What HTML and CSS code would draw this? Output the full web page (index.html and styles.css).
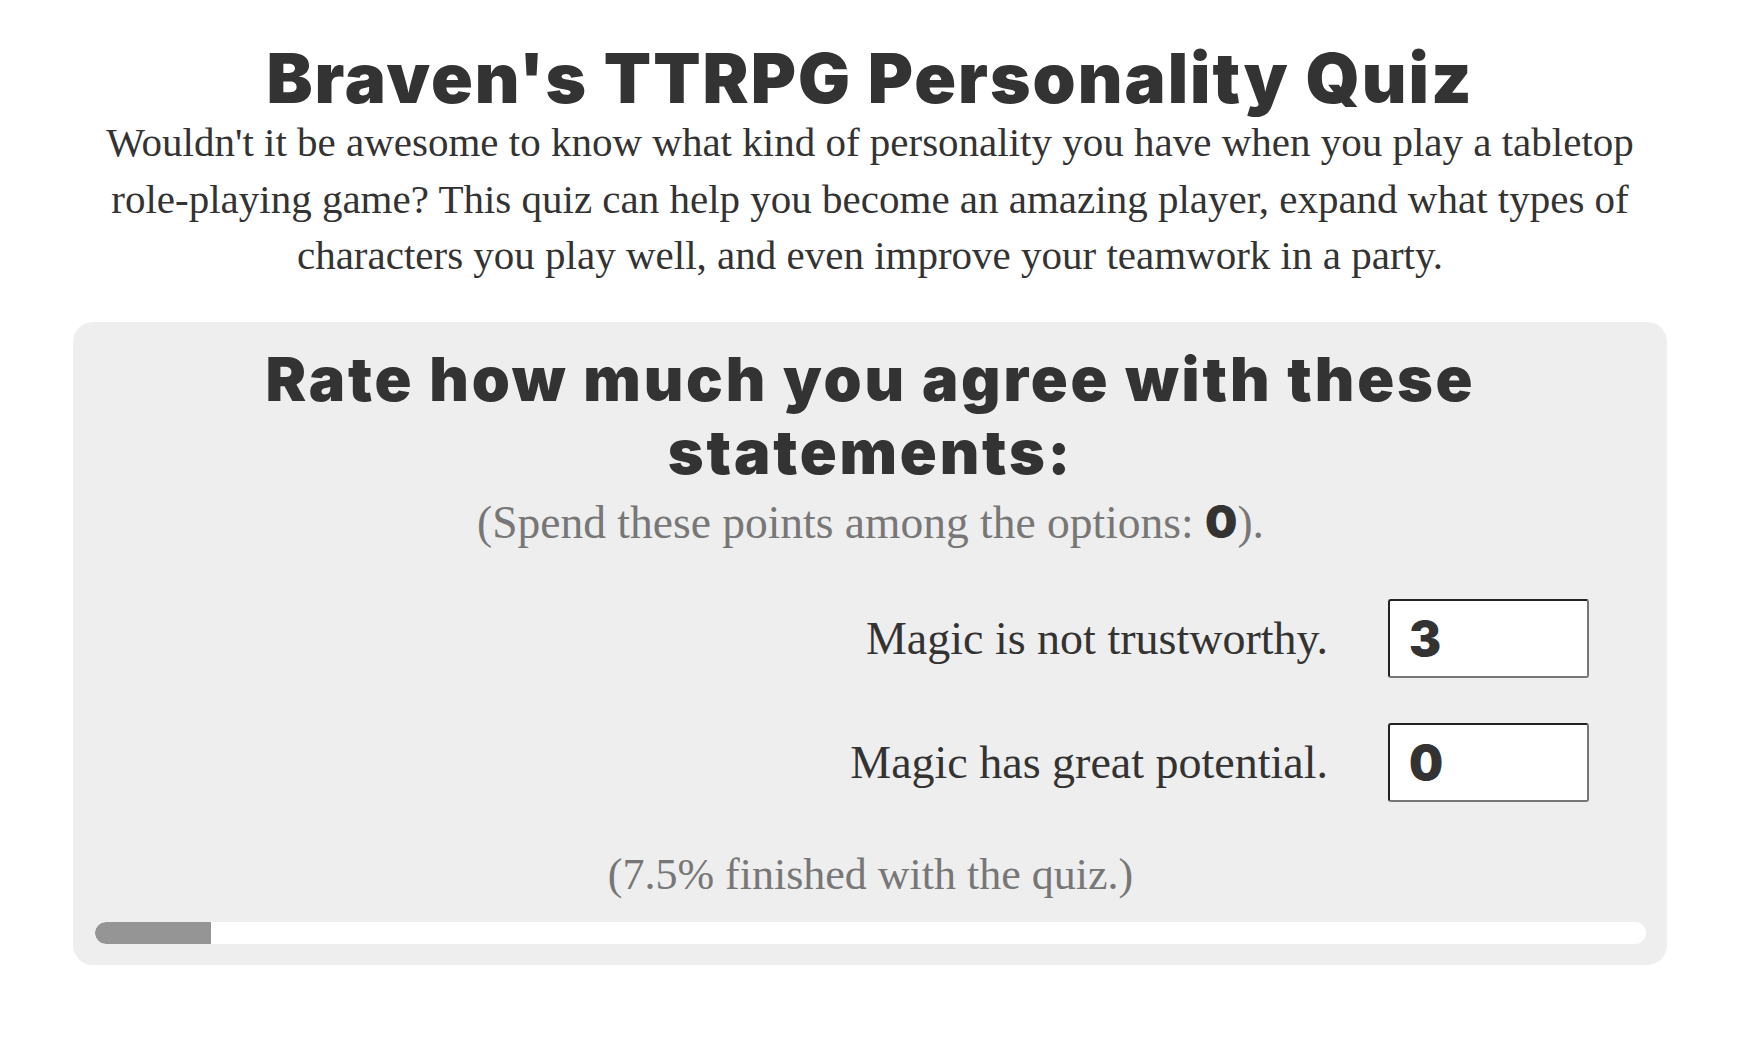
FILE: index.html
```html
<!DOCTYPE html>
<html lang="en">
<head>
<meta charset="utf-8">
<title>Braven's TTRPG Personality Quiz</title>
<link rel="stylesheet" href="styles.css">
</head>
<body>
<main class="page">
  <h1 class="title">Braven's TTRPG Personality Quiz</h1>
  <p class="intro">Wouldn't it be awesome to know what kind of personality you have when you play a tabletop <span class="nowrap">role-playing</span> game? This quiz can help you become an amazing player, expand what types of characters you play well, and even improve your teamwork in a party.</p>
  <section class="card">
    <h2 class="card-title">Rate how much you agree with these statements:</h2>
    <p class="hint">(Spend these points among the options: <b class="points">0</b>).</p>
    <div class="rows">
      <label class="row">
        <span class="row-label">Magic is not trustworthy.</span>
        <input class="row-input" type="text" value="3">
      </label>
      <label class="row">
        <span class="row-label">Magic has great potential.</span>
        <input class="row-input" type="text" value="0">
      </label>
    </div>
    <p class="progress-text">(7.5% finished with the quiz.)</p>
    <div class="bar"><div class="bar-fill" style="width: 7.5%"></div></div>
  </section>
</main>
</body>
</html>
```

FILE: styles.css
```css
html, body {
  margin: 0;
  padding: 0;
  background: #ffffff;
}

body {
  font-family: "Liberation Serif", "Times New Roman", serif;
  color: #333333;
}

.page {
  padding: 0 73px;
}

.nowrap {
  white-space: nowrap;
}

.title {
  margin: 47px 0 0;
  font-family: Inter, "Liberation Sans", sans-serif;
  font-weight: 900;
  font-size: 69px;
  line-height: 62px;
  letter-spacing: 2px;
  text-align: center;
  color: #333333;
}

.intro {
  margin: 5px 0 0;
  font-size: 41px;
  line-height: 56.6px;
  text-align: center;
}

.card {
  margin-top: 38px;
  background: #eeeeee;
  border-radius: 20px;
  padding: 21px 21px 21px 22px;
}

.card-title {
  margin: 0;
  font-family: Inter, "Liberation Sans", sans-serif;
  font-weight: 900;
  font-size: 61px;
  line-height: 73px;
  letter-spacing: 2.8px;
  text-align: center;
  color: #333333;
}

.hint {
  margin: 8px 0 0;
  font-size: 45.5px;
  line-height: 50px;
  text-align: center;
  color: #777777;
}

.points {
  font-family: Inter, "Liberation Sans", sans-serif;
  font-weight: 900;
  color: #333333;
}

.rows {
  margin-top: 51px;
  display: flex;
  flex-direction: column;
  gap: 45px;
}

.row {
  display: flex;
  align-items: center;
  justify-content: flex-end;
  gap: 60px;
  padding-right: 57px;
}

.row-label {
  font-size: 46px;
  color: #333333;
}

.row-input {
  box-sizing: border-box;
  width: 201px;
  height: 79px;
  margin: 0;
  padding: 0 0 0 19px;
  border: 2px solid #222222;
  border-right-color: #767676;
  border-bottom-color: #767676;
  border-radius: 3px;
  background: #ffffff;
  font-family: Inter, "Liberation Sans", sans-serif;
  font-weight: 900;
  font-size: 48px;
  color: #333333;
  outline: none;
}

.progress-text {
  margin: 48px 0 0;
  font-size: 44px;
  line-height: 50px;
  text-align: center;
  color: #777777;
}

.bar {
  margin-top: 22px;
  height: 22px;
  background: #ffffff;
  border-radius: 11px;
  overflow: hidden;
}

.bar-fill {
  height: 100%;
  background: #959595;
  border-radius: 11px 0 0 11px;
}
```
